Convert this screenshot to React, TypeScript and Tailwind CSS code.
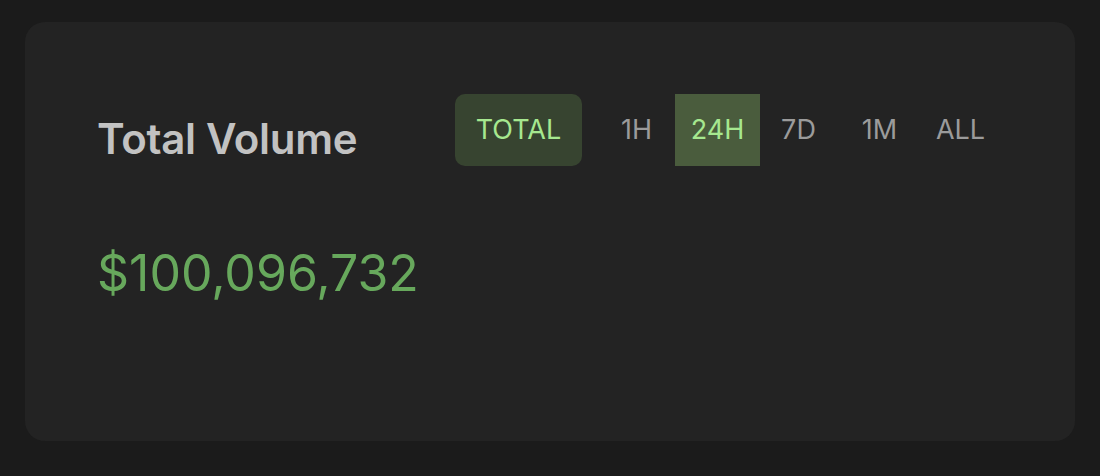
const ranges = ['1H', '24H', '7D', '1M', 'ALL'];

export default function App() {
  const active = '24H';

  return (
    <div
      className="h-[476px] w-[1100px] bg-[#1b1b1b] pl-[25px] pt-[22px]"
      style={{ fontFamily: 'Inter, "Noto Sans", sans-serif' }}
    >
      <div className="h-[419px] w-[1050px] rounded-[20px] bg-[#232323] pl-[72px] pr-[74px] pt-[72px]">
        <div className="flex items-start justify-between">
          <h2 className="mt-[24px] text-[42px] leading-none font-semibold tracking-[-0.3px] text-[#c2c2c2]">
            Total Volume
          </h2>
          <div className="flex items-center">
            <button className="flex h-[72px] w-[127px] items-center justify-center rounded-[10px] bg-[#374430] text-[27px] font-normal text-[#a6e88f]">
              TOTAL
            </button>
            <div className="ml-[14px] flex">
              {ranges.map((r) => (
                <div key={r} className="flex w-[81px] justify-center">
                  <button
                    className={`flex h-[72px] w-[85px] shrink-0 items-center justify-center text-[27px] font-normal ${
                      r === active ? 'bg-[#4a5c3d] text-[#a6e88f]' : 'text-[#9b9b9b]'
                    }`}
                  >
                    {r}
                  </button>
                </div>
              ))}
            </div>
          </div>
        </div>
        <div className="mt-[82px] text-[50px] leading-none font-normal text-[#67a85c]">
          $100,096,732
        </div>
      </div>
    </div>
  );
}
